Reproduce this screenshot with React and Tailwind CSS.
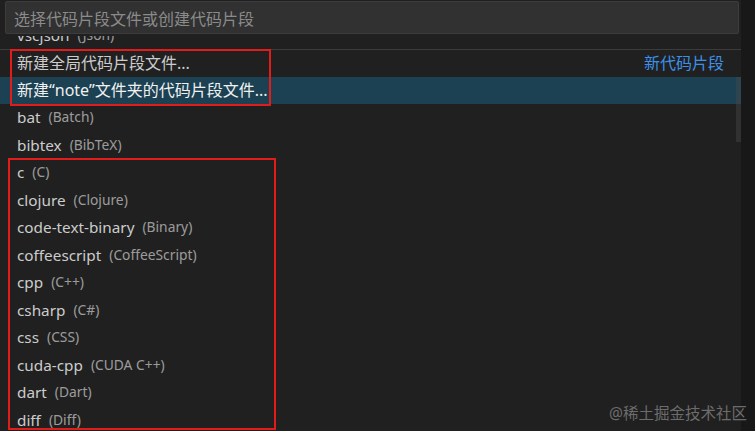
import React from "react";

const items = [
  ["bat", "Batch"],
  ["bibtex", "BibTeX"],
  ["c", "C"],
  ["clojure", "Clojure"],
  ["code-text-binary", "Binary"],
  ["coffeescript", "CoffeeScript"],
  ["cpp", "C++"],
  ["csharp", "C#"],
  ["css", "CSS"],
  ["cuda-cpp", "CUDA C++"],
  ["dart", "Dart"],
  ["diff", "Diff"],
];

function Row({ label, desc, active, cjk }) {
  return (
    <div
      className={
        "h-[27.5px] shrink-0 flex items-center pl-[17px] pr-4 whitespace-nowrap " +
        (active ? "bg-[#1b4152] text-[#f0f0f0]" : "text-[#cccccc]")
      }
    >
      <span className={cjk ? "text-[16px]" : "text-[15.3px]"}>{label}</span>
      {desc && (
        <span className="ml-[8px] text-[13.8px] text-[#d0d0d0] opacity-70">({desc})</span>
      )}
    </div>
  );
}

export default function App() {
  return (
    <div
      className="relative w-[755px] h-[431px] overflow-hidden bg-[#181818] flex"
      style={{ fontFamily: '"Noto Sans", "Noto Sans CJK SC", sans-serif' }}
    >
      <div className="w-[741px] h-full bg-[#202020] flex flex-col relative">
        <div className="pt-[1px] px-[5px] pr-[2px] pb-[2px] shrink-0 relative z-10 bg-[#202020]">
          <div className="h-[33px] bg-[#313131] border border-[#3c3c3c] rounded-[2px] flex items-center pl-[8px] pt-[2px] text-[16px] text-[#8b8b8b]">
            选择代码片段文件或创建代码片段
          </div>
        </div>
        <div className="relative flex-1 overflow-hidden">
          <div className="flex flex-col -mt-[14.5px]">
            <Row label="vscjson" desc="Json" />
            <div className="border-t border-[#3c3c3c] h-[27.5px] shrink-0 flex items-center justify-between pl-[17px] pr-[17px] text-[#cccccc] whitespace-nowrap">
              <span className="text-[16px]">新建全局代码片段文件...</span>
              <span className="text-[16px] text-[#3d90e8]">新代码片段</span>
            </div>
            <Row label="新建“note”文件夹的代码片段文件..." active cjk />
            {items.map(([l, d]) => (
              <Row key={l} label={l} desc={d} />
            ))}
          </div>
          <div className="absolute right-[-6px] top-[41px] w-[11px] h-[65px] bg-[#4a4a4a] opacity-40" />
        </div>
      </div>
      <div className="absolute left-[10px] top-[49px] w-[261px] h-[57px] border-2 border-[#e21b1b]" />
      <div className="absolute left-[8px] top-[158px] w-[268px] h-[272px] border-2 border-[#e21b1b]" />
      <div className="absolute right-[8px] bottom-[6px] text-[15.5px] text-[#6c6c6c] whitespace-nowrap">
        @稀土掘金技术社区
      </div>
    </div>
  );
}
